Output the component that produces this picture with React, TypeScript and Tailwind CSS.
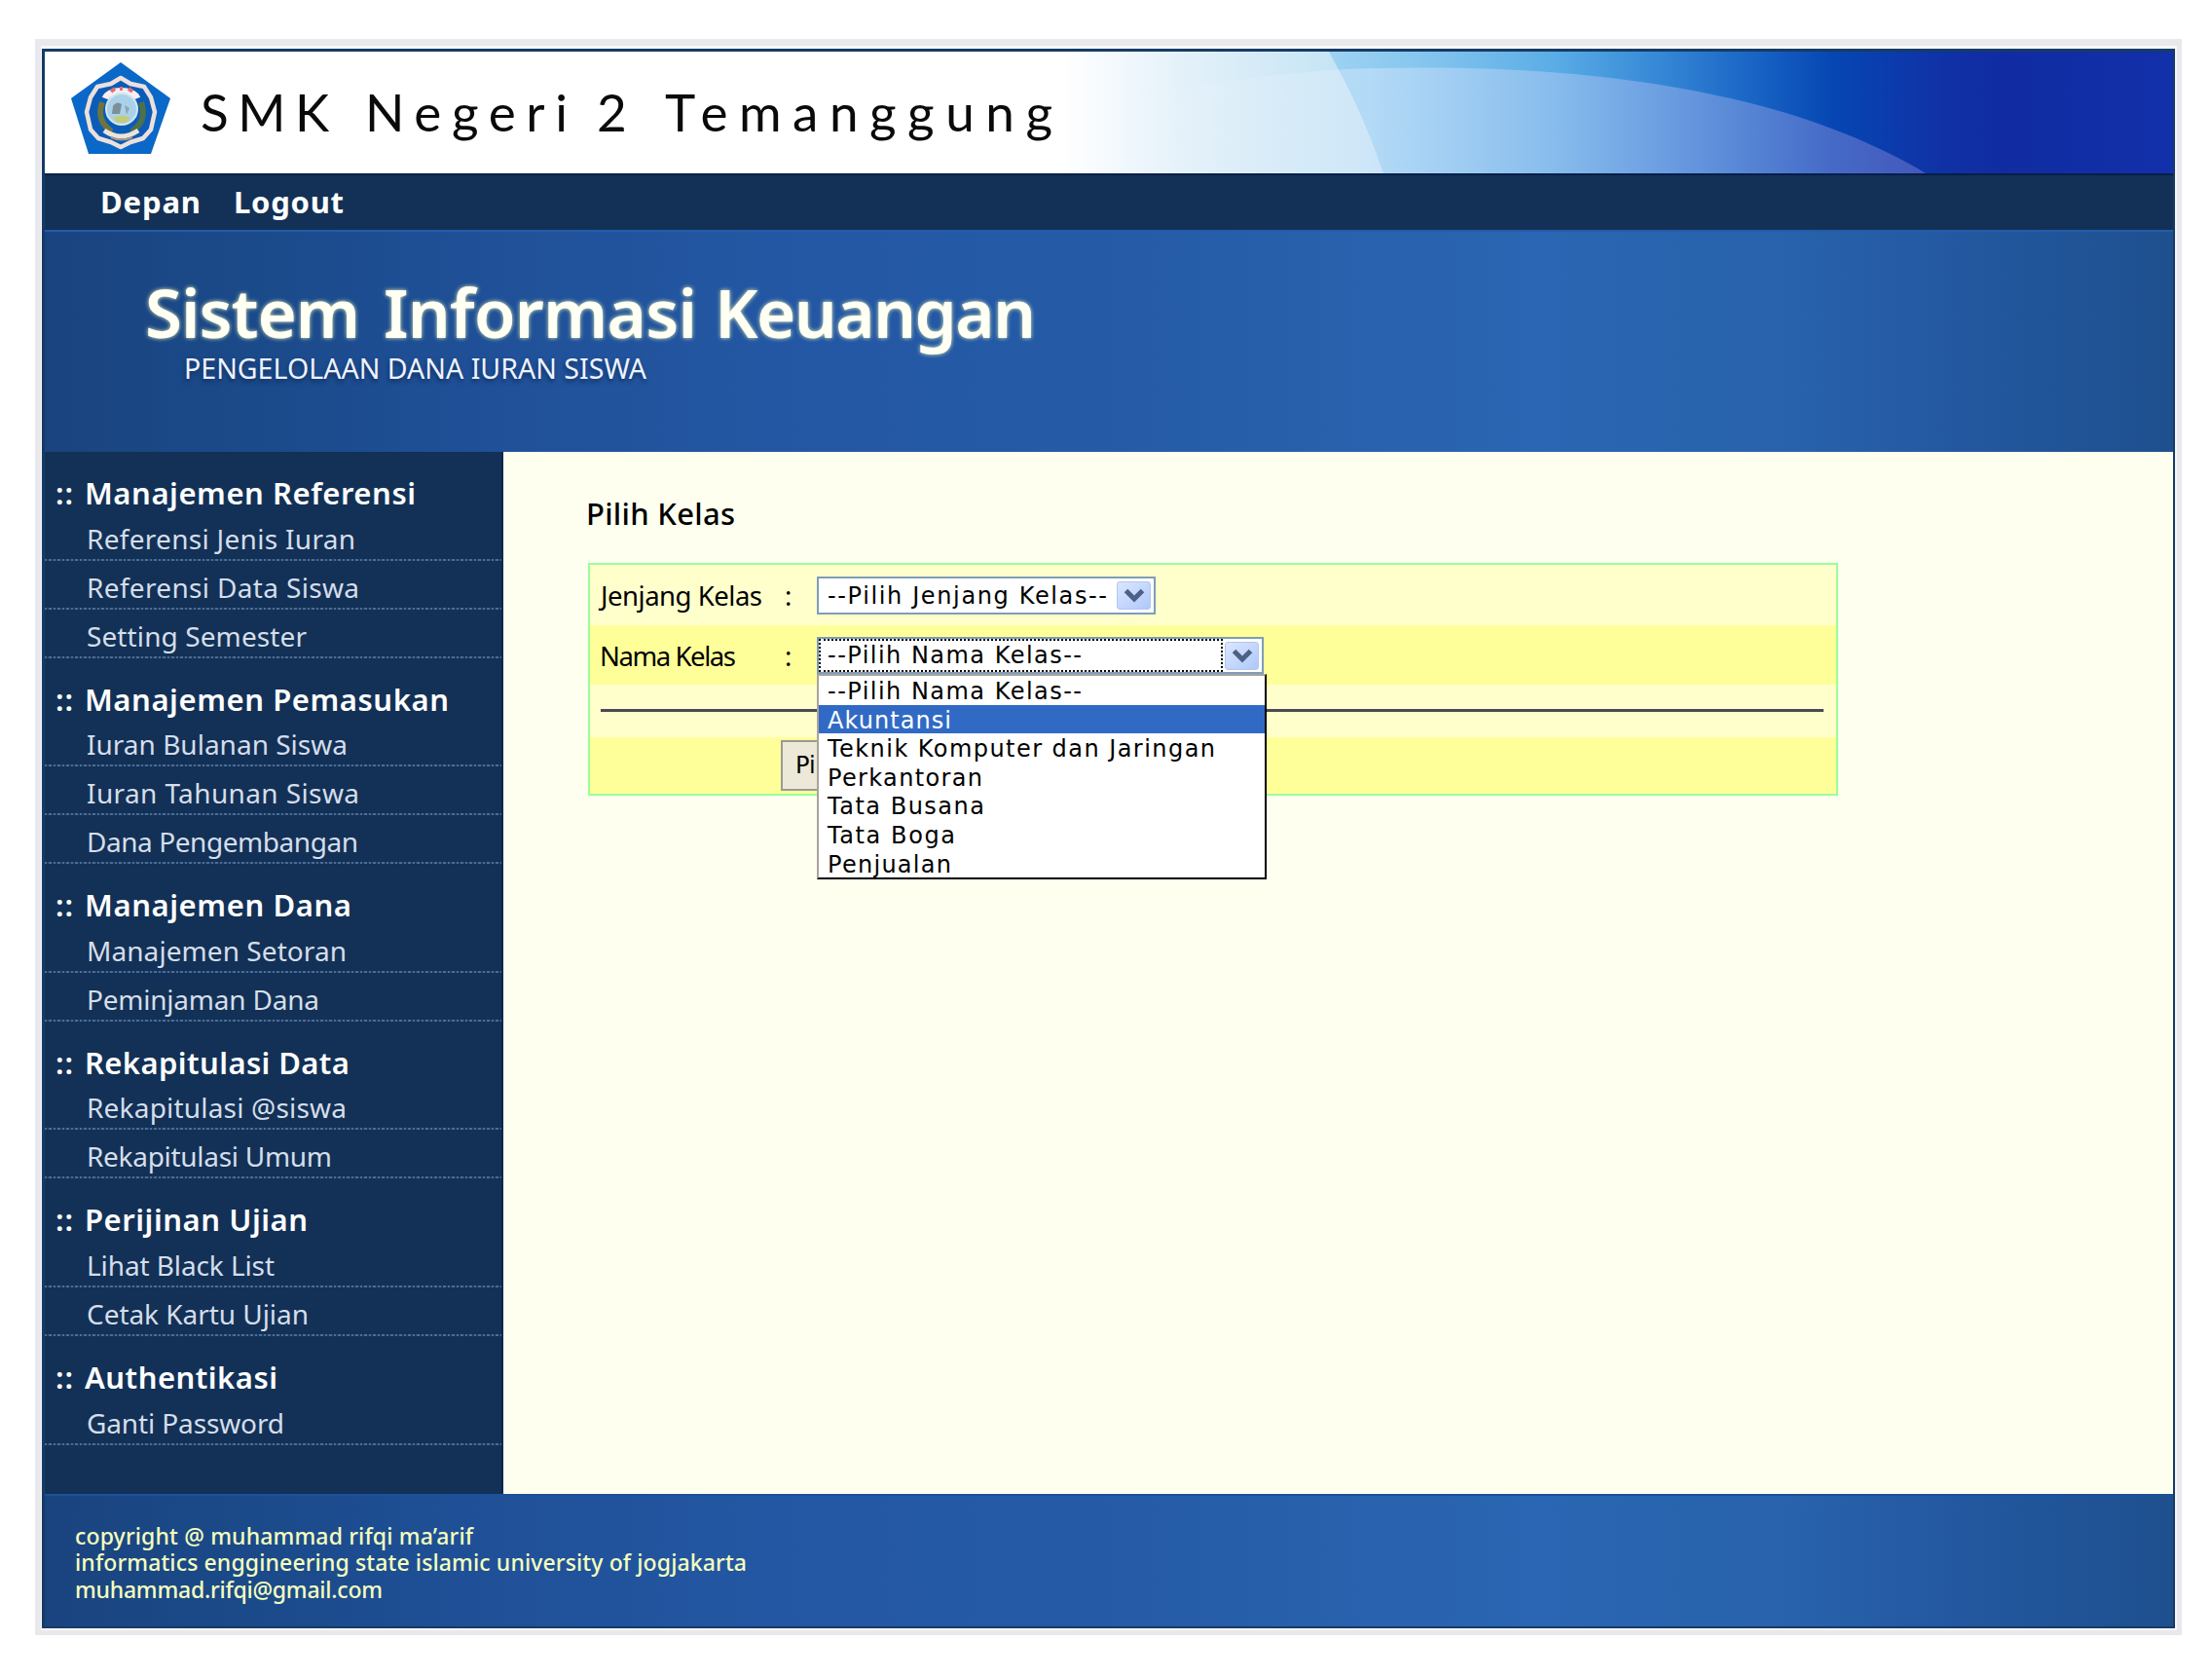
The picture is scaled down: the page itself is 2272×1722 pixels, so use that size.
import { useLayoutEffect, useRef, useState } from 'react';

/** Single-line text whose tracking is adjusted so that it spans `width` pixels. */
function Tracked({ text, width, className = '' }: { text: string; width: number; className?: string }) {
  const ref = useRef<HTMLSpanElement>(null);
  const [spacing, setSpacing] = useState(0);
  useLayoutEffect(() => {
    const el = ref.current;
    if (el) setSpacing((width - el.getBoundingClientRect().width) / Math.max(1, text.length - 1));
  }, [text, width]);
  return (
    <span ref={ref} className={`inline-block whitespace-pre ${className}`} style={{ letterSpacing: spacing }}>
      {text}
    </span>
  );
}

type Item = [label: string, width: number];

const menu: { title: Item; items: Item[] }[] = [
  {
    title: ['Manajemen Referensi', 340],
    items: [['Referensi Jenis Iuran', 276], ['Referensi Data Siswa', 280], ['Setting Semester', 226]],
  },
  {
    title: ['Manajemen Pemasukan', 374],
    items: [['Iuran Bulanan Siswa', 268], ['Iuran Tahunan Siswa', 280], ['Dana Pengembangan', 279]],
  },
  { title: ['Manajemen Dana', 274], items: [['Manajemen Setoran', 267], ['Peminjaman Dana', 239]] },
  { title: ['Rekapitulasi Data', 272], items: [['Rekapitulasi @siswa', 267], ['Rekapitulasi Umum', 252]] },
  { title: ['Perijinan Ujian', 229], items: [['Lihat Black List', 193], ['Cetak Kartu Ujian', 228]] },
  { title: ['Authentikasi', 198], items: [['Ganti Password', 203]] },
];

const options: Item[] = [
  ['--Pilih Nama Kelas--', 261],
  ['Akuntansi', 127],
  ['Teknik Komputer dan Jaringan', 398],
  ['Perkantoran', 159],
  ['Tata Busana', 161],
  ['Tata Boga', 131],
  ['Penjualan', 127],
];

function Logo() {
  return (
    <svg className="mb-[9px] h-[96px] w-[104px] shrink-0" viewBox="0 0 104 96">
      <polygon points="52,1 103,38 83,95 19,95 1,38" fill="#0a68c8" />
      <polygon
        points="52,17 62,23 76,26 83,37 87,52 83,70 75,79 62,83 52,88 42,83 29,79 21,70 17,52 21,37 28,26 42,23"
        fill="#0a5cb8"
        stroke="#ece0dc"
        strokeWidth="4.5"
        strokeLinejoin="round"
      />
      <path d="M33 42C28 56 33 66 43 72" fill="none" stroke="#6d7440" strokeWidth="6" />
      <path d="M73 42C78 56 73 66 63 72" fill="none" stroke="#4f7048" strokeWidth="6" />
      <path d="M36 38C40 28 65 28 69 38" fill="none" stroke="#f6eef0" strokeWidth="7" />
      <path d="M42 31l4-3M51 28h3M60 28l4 3" stroke="#e86a74" strokeWidth="4" />
      <circle cx="53" cy="49" r="16" fill="#a9d2ea" stroke="#d3e6ee" strokeWidth="2" />
      <path d="M44 46q4-6 9-2l-2 10h-8z" fill="#7d8f96" />
      <path d="M56 45l5 3-3 7z" fill="#8da6b4" />
      <path d="M44 58q9-5 18 0l-4 5h-10z" fill="#c3cb7e" />
      <path d="M35 71q17 12 35 0" fill="none" stroke="#ece4d8" strokeWidth="5" />
      <path d="M42 78q11 5 22 0" fill="none" stroke="#a89a84" strokeWidth="2" />
    </svg>
  );
}

function HeaderArt() {
  return (
    <svg className="absolute top-0 right-0 h-[125px] w-[1152px]" viewBox="1080 53 1152 125" preserveAspectRatio="none">
      <defs>
        <linearGradient id="pale" gradientUnits="userSpaceOnUse" x1="1090" x2="1420" y1="0" y2="0">
          <stop offset="0" stopColor="#ffffff" />
          <stop offset="0.35" stopColor="#e6f2fa" />
          <stop offset="0.8" stopColor="#c9e6f5" />
          <stop offset="1" stopColor="#b9def4" />
        </linearGradient>
        <linearGradient id="deep" gradientUnits="userSpaceOnUse" x1="1360" x2="2232" y1="0" y2="0">
          <stop offset="0" stopColor="#9fd3f2" />
          <stop offset="0.12" stopColor="#84c5ef" />
          <stop offset="0.27" stopColor="#5aade6" />
          <stop offset="0.38" stopColor="#3a8cd8" />
          <stop offset="0.5" stopColor="#1a66c6" />
          <stop offset="0.6" stopColor="#0646b3" />
          <stop offset="0.73" stopColor="#1031a6" />
          <stop offset="0.8" stopColor="#112ca2" />
          <stop offset="1" stopColor="#1230aa" />
        </linearGradient>
        <linearGradient id="arc" gradientUnits="userSpaceOnUse" x1="1180" x2="1980" y1="0" y2="0">
          <stop offset="0" stopColor="#f4f4ff" stopOpacity="0" />
          <stop offset="0.28" stopColor="#eef2ff" stopOpacity="0.35" />
          <stop offset="0.7" stopColor="#c9c4f4" stopOpacity="0.36" />
          <stop offset="1" stopColor="#b9a2e8" stopOpacity="0.32" />
        </linearGradient>
      </defs>
      <rect x="1080" y="53" width="1152" height="125" fill="url(#pale)" />
      <path d="M1365 53Q1400 115 1421 178H2232V53Z" fill="url(#deep)" />
      <path d="M1120 178V112C1220 86 1330 71 1420 70C1600 66 1820 84 1978 178Z" fill="url(#arc)" />
    </svg>
  );
}

function ArrowButton() {
  return (
    <span className="flex h-[29px] w-[35px] shrink-0 items-center justify-center rounded-[3px] border border-[#b3c6f2] bg-linear-to-br from-[#dbe6ff] to-[#afc8fa]">
      <svg className="h-[15px] w-[22px]" viewBox="0 0 22 15">
        <path d="M2.500 2.500L11 11L19.500 2.500" fill="none" stroke="#4d6185" strokeWidth="5" />
      </svg>
    </span>
  );
}

const blueBand =
  'bg-[linear-gradient(90deg,#1a447f_0%,#1b4a8a_10%,#1f5097_20%,#2457a3_34%,#245aa6_48%,#285fab_58%,#2a66b3_70%,#2862ac_82%,#2358a0_90%,#1e508f_100%)]';

export default function App() {
  return (
    <div className="h-[1722px] w-[2272px] overflow-hidden bg-white pt-[40px] pl-[36px] font-['Noto_Sans',sans-serif]">
      <div className="h-[1639px] w-[2205px] bg-[#e8e8ed] pt-[7px] pr-[5px] pb-[5px] pl-[6px]">
        <div className="h-full w-full border-t-[3px] border-r-2 border-b-2 border-l border-[#fbf6f7]">
          <div className="flex h-full w-full flex-col border-t-[3px] border-r-2 border-b-2 border-l-[3px] border-[#153c66]">
            <header className="relative flex h-[125px] shrink-0 items-center bg-white pl-[26px]">
              <HeaderArt />
              <Logo />
              <h1 className="relative ml-[30px] flex pb-[2px] font-['Lato',sans-serif] text-[53px] leading-[60px] text-[#0a0a0a]">
                <span className="w-[169px]">
                  <Tracked text="SMK" width={132} />
                </span>
                <span className="w-[238px]">
                  <Tracked text="Negeri" width={208} />
                </span>
                <span className="w-[70px]">2</span>
                <Tracked text="Temanggung" width={398} />
              </h1>
            </header>

            <nav className="flex h-[58px] shrink-0 items-center border-t-2 border-[#061f48] bg-[#133156] pb-[3px] pl-[57px] text-[31px] leading-[40px] font-bold text-white">
              <span className="w-[137px]">
                <Tracked text="Depan" width={103} />
              </span>
              <Tracked text="Logout" width={113} />
            </nav>

            <section className={`h-[228px] shrink-0 border-t-2 border-[#255ba8] pt-[43px] pl-[103px] ${blueBand}`}>
              <h2 className="flex h-[79px] text-[69px] leading-[78px] font-semibold text-[#fffff4] [text-shadow:0_0_4px_#e8f0b0]">
                <span className="w-[245px]">
                  <Tracked text="Sistem" width={221} />
                </span>
                <span className="w-[340px]">
                  <Tracked text="Informasi" width={322} />
                </span>
                <Tracked text="Keuangan" width={330} />
              </h2>
              <p className="pl-[40px] text-[28.500px] leading-[36px] text-[#eef3ff] [text-shadow:-1px_3px_4px_#12305f]">
                <Tracked text="PENGELOLAAN DANA IURAN SISWA" width={475} />
              </p>
            </section>

            <div className="flex h-[1070px] shrink-0">
              <aside className="w-[471px] shrink-0 border-r-2 border-[#0a2650] bg-[#133156]">
                {menu.map((group) => (
                  <div key={group.title[0]}>
                    <h3 className="flex h-[61.600px] pt-[22px] pl-[11px] text-[31px] leading-[40px] font-semibold text-white">
                      <span className="w-[30px]">
                        <Tracked text="::" width={18} />
                      </span>
                      <Tracked text={group.title[0]} width={group.title[1]} />
                    </h3>
                    {group.items.map(([label, width]) => (
                      <div key={label} className="h-[50px]">
                        <div className="h-[48px] pt-[9px] pl-[43px] text-[28px] leading-[37px] text-[#d5deeb]">
                          <Tracked text={label} width={width} />
                        </div>
                        <div className="h-[2px] w-[469px] bg-[repeating-linear-gradient(90deg,#4b6c96_0_2.250px,#1d3c63_2.250px_4.500px)]" />
                      </div>
                    ))}
                  </div>
                ))}
              </aside>

              <main className="flex-1 bg-[#fffff0] pt-[43px] pl-[87px] text-black">
                <h2 className="h-[71px] pl-px text-[31px] leading-[40px] font-medium">
                  <Tracked text="Pilih Kelas" width={153} className="-ml-[3px]" />
                </h2>
                <div className="w-[1284px] border-2 border-[#99ff99] text-[27.500px]">
                  <div className="flex h-[62px] bg-[#ffffcc] pt-[12px] pl-[11px]">
                    <span className="w-[189px] pt-px leading-[38px]">
                      <Tracked text="Jenjang Kelas" width={166} />
                    </span>
                    <span className="w-[33px] pt-px leading-[38px]">:</span>
                    <span className="flex h-[39px] w-[348px] items-center justify-between border-2 border-[#7f9db9] bg-white pr-[3px] pl-[9px] font-['DejaVu_Sans',sans-serif] text-[24px] leading-[34px]">
                      <Tracked text="--Pilih Jenjang Kelas--" width={287} />
                      <ArrowButton />
                    </span>
                  </div>
                  <div className="flex h-[61px] bg-[#ffff99] pt-[12px] pl-[11px]">
                    <span className="w-[189px] leading-[40px]">
                      <Tracked text="Nama Kelas" width={140} className="-ml-px" />
                    </span>
                    <span className="w-[33px] leading-[40px]">:</span>
                    <div className="relative h-[38px] w-[459px] font-['DejaVu_Sans',sans-serif] text-[24px]">
                      <div className="flex h-[38px] items-center border-2 border-[#7f9db9] bg-white pr-[3px]">
                        <span className="flex h-[34px] flex-1 items-center border-2 border-dotted border-black pl-[7px] leading-[30px]">
                          <Tracked text="--Pilih Nama Kelas--" width={261} />
                        </span>
                        <span className="ml-[2px] flex">
                          <ArrowButton />
                        </span>
                      </div>
                      <ul className="absolute top-[38px] left-0 z-10 w-[462px] border-2 border-t-[#a8a49c] border-r-black border-b-black border-l-[#a8a49c] bg-white">
                        {options.map(([label, width], i) => (
                          <li
                            key={label}
                            className={
                              i === 1
                                ? 'h-[29.600px] bg-[#316ac5] pl-[9px] leading-[32px] text-white'
                                : 'h-[29.600px] pl-[9px] leading-[32px] text-black'
                            }
                          >
                            <Tracked text={label} width={width} />
                          </li>
                        ))}
                      </ul>
                    </div>
                  </div>
                  <div className="h-[54px] bg-[#ffffcc] pt-[25px] pr-[13px] pl-[11px]">
                    <div className="h-[3px] bg-[#4a4a55]" />
                  </div>
                  <div className="h-[58px] bg-[#ffff99] pt-[3px] pl-[196px]">
                    <button className="flex h-[52px] w-[90px] items-center border-2 border-[#9a9a96] bg-[#ece9d8] pl-[13px] font-['DejaVu_Sans',sans-serif] text-[24px]">
                      Pilih
                    </button>
                  </div>
                </div>
              </main>
            </div>

            <footer
              className={`flex-1 border-t-2 border-[#1c5099] pt-[28px] pl-[31px] text-[23px] leading-[27.400px] font-medium text-[#f4ffbe] ${blueBand}`}
            >
              <div>
                <Tracked text="copyright @ muhammad rifqi ma’arif" width={409} />
              </div>
              <div>
                <Tracked text="informatics enggineering state islamic university of jogjakarta" width={690} />
              </div>
              <div>
                <Tracked text="muhammad.rifqi@gmail.com" width={316} />
              </div>
            </footer>
          </div>
        </div>
      </div>
    </div>
  );
}
